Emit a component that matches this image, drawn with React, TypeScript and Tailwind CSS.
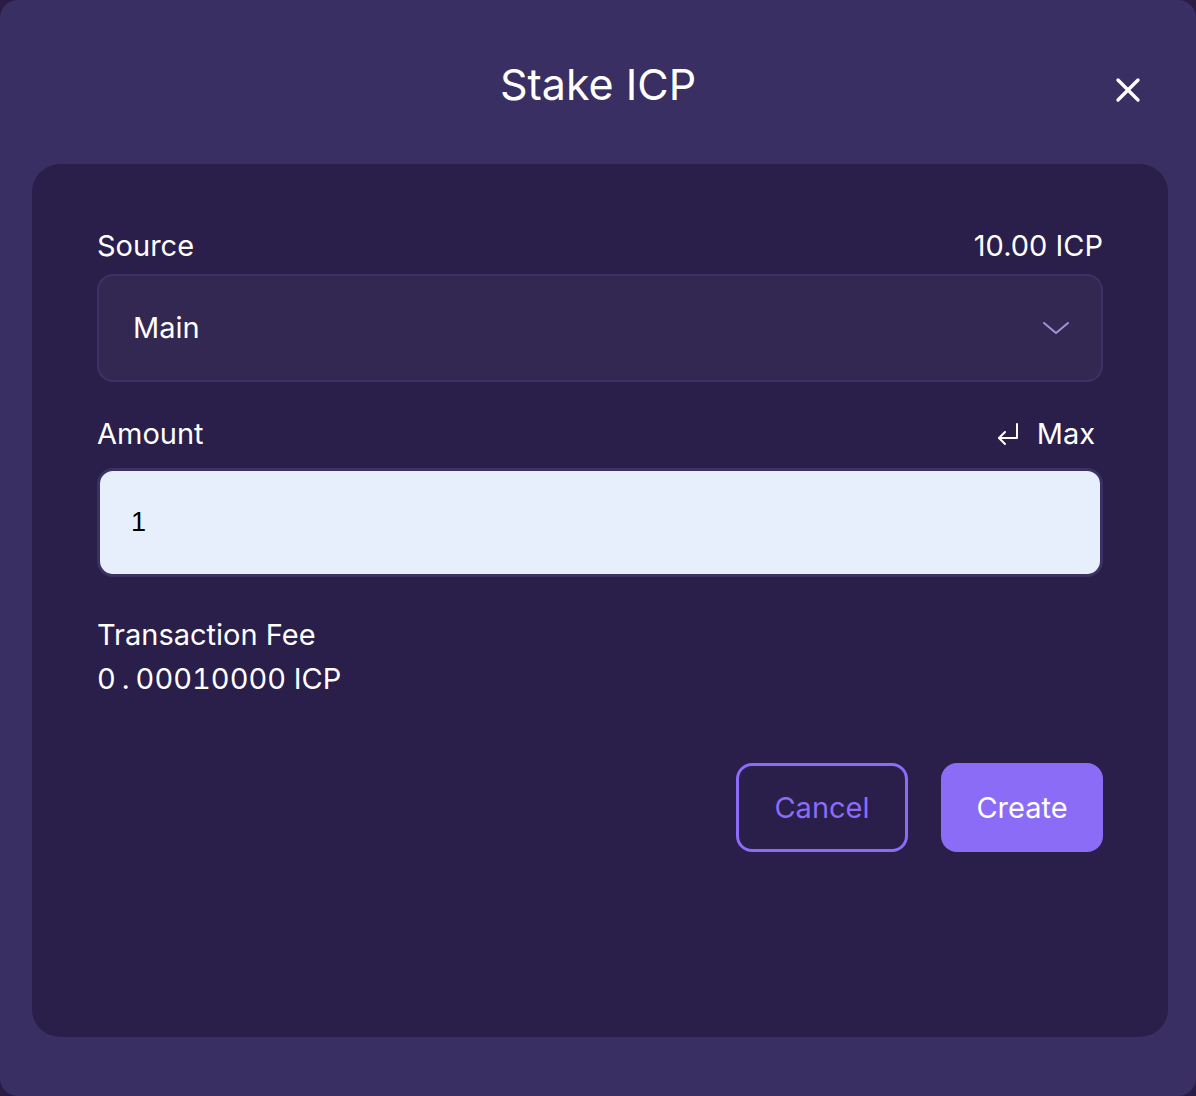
import { X } from 'lucide-react'

function ReturnIcon() {
  return (
    <svg width="26" height="26" viewBox="0 0 26 26" fill="none" stroke="currentColor" strokeWidth="2" strokeLinecap="round" strokeLinejoin="round">
      <path d="M22 3v14H4" />
      <path d="M10 11l-6 6 6 6" />
    </svg>
  )
}

function Chevron() {
  return (
    <svg width="28" height="14" viewBox="0 0 28 14" fill="none" stroke="#a393d8" strokeWidth="2" strokeLinecap="round" strokeLinejoin="round">
      <path d="M2 2l12 10 12-10" />
    </svg>
  )
}

export default function App() {
  return (
    <div className="w-[1196px] h-[1096px] bg-[#2a1c45]" style={{ fontFamily: 'Inter, "Noto Sans", sans-serif' }}>
      <div className="w-full h-full rounded-[18px] bg-[#3a2f62] flex flex-col">
        <div className="relative h-[164px] flex items-center justify-center pt-[4px]">
          <h1 className="text-white text-[43px] leading-none">Stake ICP</h1>
          <button className="absolute right-[48px] top-[70px] text-white">
            <X size={40} strokeWidth={2} />
          </button>
        </div>
        <div className="ml-[32px] mr-[28px] h-[873px] rounded-[28px] bg-[#2a1e4b] px-[65px] pt-[64px] flex flex-col">
          <div className="flex items-center justify-between text-white text-[29px] leading-[36px] mb-[10px]">
            <span>Source</span>
            <span>10.00 ICP</span>
          </div>
          <div className="h-[108px] rounded-[16px] bg-[#322852] border-2 border-[#3d3266] flex items-center justify-between pl-[34px] pr-[31px]">
            <span className="text-white text-[29px]">Main</span>
            <Chevron />
          </div>
          <div className="flex items-center justify-between text-white text-[29px] leading-[36px] mt-[34px] mb-[16px]">
            <span>Amount</span>
            <span className="flex items-center gap-[16px] pr-[8px]">
              <ReturnIcon />
              Max
            </span>
          </div>
          <div className="h-[109px] rounded-[16px] bg-[#e8effc] border-[3px] border-[#3c3164] flex items-center pl-[31px]">
            <span className="text-black text-[27px]" style={{ fontFamily: '"Liberation Sans", Arial, sans-serif' }}>1</span>
          </div>
          <div className="mt-[36px] text-white text-[29px] leading-[44px]">
            <div>Transaction Fee</div>
            <div className="tabular-nums">
              0<span className="mx-[6px]">.</span>00010000 ICP
            </div>
          </div>
          <div className="mt-[62px] flex justify-end gap-[33px]">
            <button className="w-[172px] h-[89px] rounded-[16px] border-[3px] border-[#8b6cf7] text-[#8b6cf7] text-[29px]">Cancel</button>
            <button className="w-[162px] h-[89px] rounded-[16px] bg-[#8b6cf7] text-white text-[29px]">Create</button>
          </div>
        </div>
      </div>
    </div>
  )
}
